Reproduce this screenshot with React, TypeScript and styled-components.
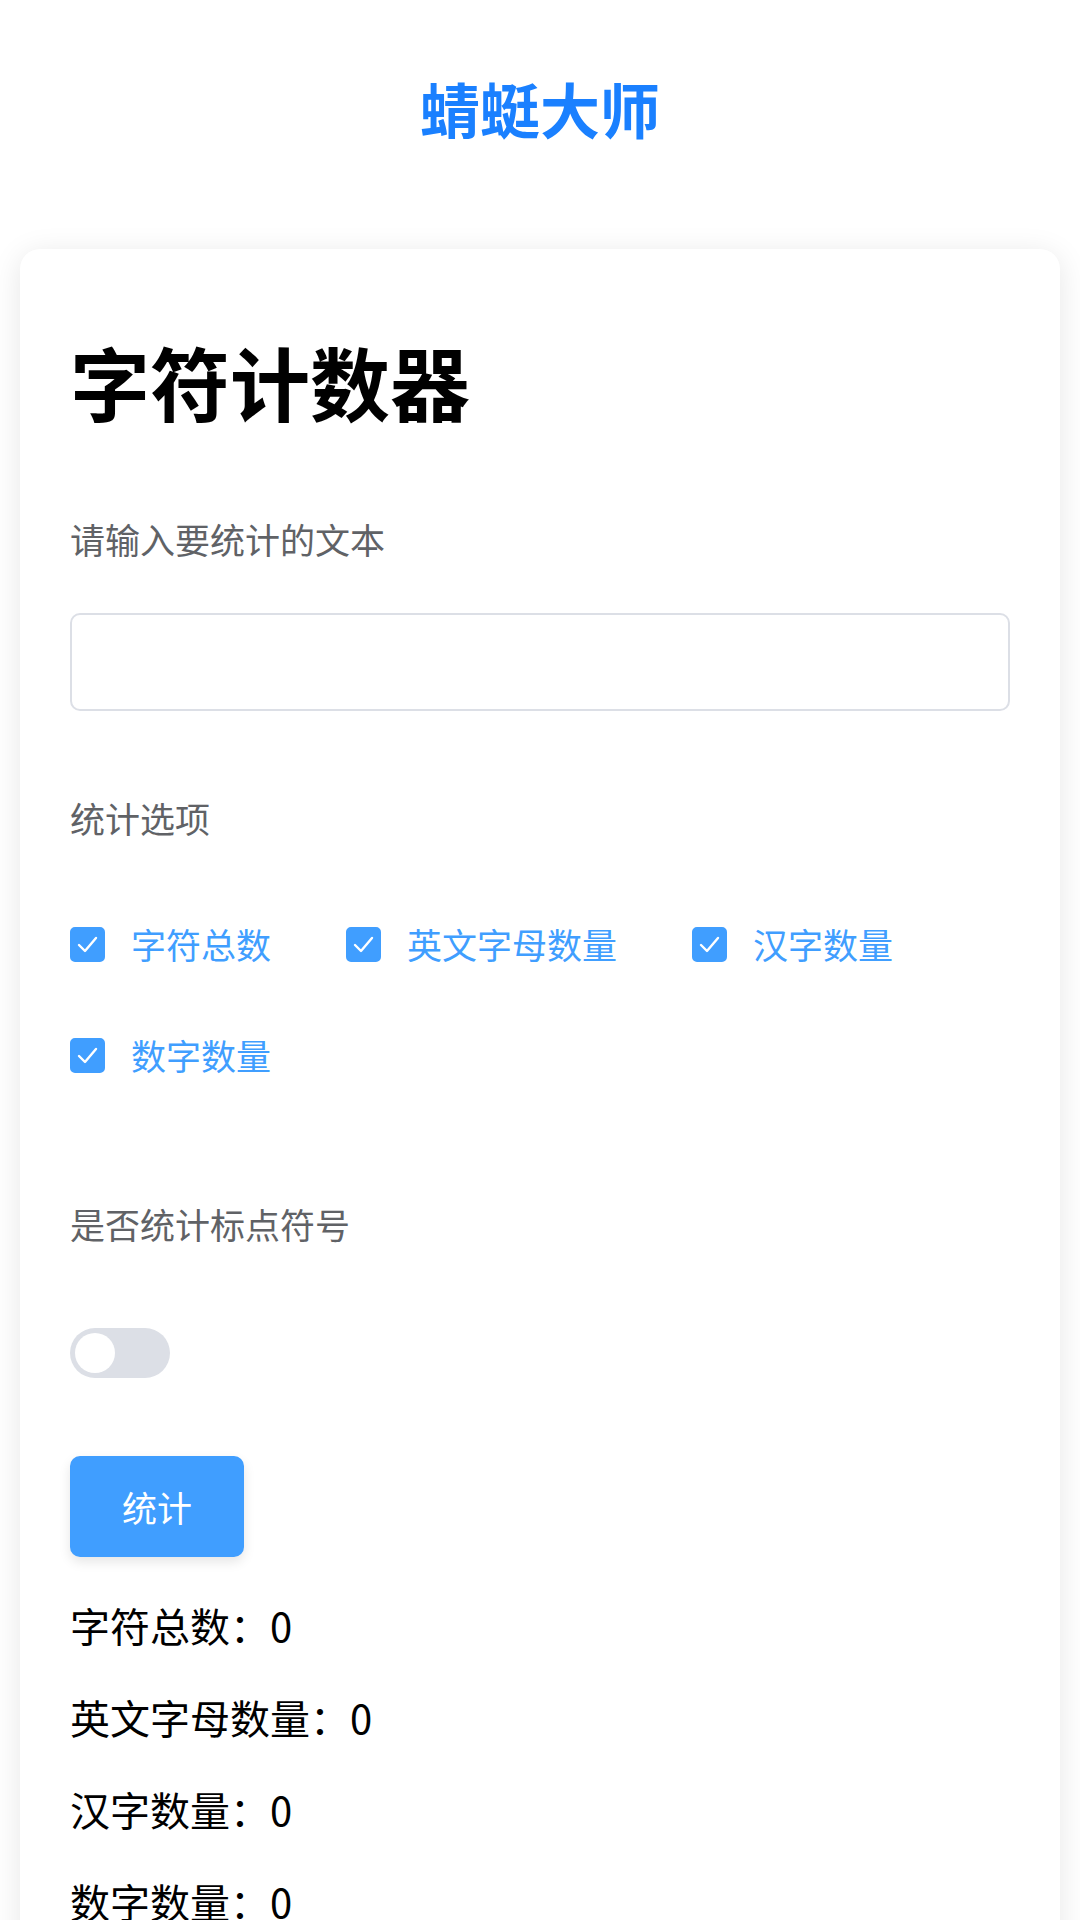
import React, { FC, useState } from 'react';
import styled, { createGlobalStyle } from 'styled-components';

const GlobalStyle = createGlobalStyle`
  html, body {
    margin: 0;
    padding: 0;
    background: #ffffff;
  }
  body {
    font-family: "Noto Sans CJK SC", "Noto Sans", sans-serif;
    color: #000;
  }
  * {
    box-sizing: border-box;
  }
`;

const StyledPage = styled.div`
  display: flex;
  flex-direction: column;
  min-height: 1920px;
  overflow: hidden;
`;

const StyledBrand = styled.h1`
  margin: 68px 0 101px;
  font-size: 60px;
  line-height: 80px;
  font-weight: 700;
  color: #1a80ff;
  text-align: center;
`;

const StyledCard = styled.main`
  margin: 0 20px;
  padding: 50px 50px 60px;
  background: #fff;
  border-radius: 20px;
  box-shadow: 0 5px 30px rgba(0, 0, 0, 0.1);
  display: flex;
  flex-direction: column;
  align-items: flex-start;
`;

const StyledHeading = styled.h2`
  margin: 31px 0 0;
  font-size: 80px;
  line-height: 100px;
  font-weight: 700;
  color: #000;
`;

const StyledLabel = styled.label<{ $top: number }>`
  display: block;
  margin-top: ${({ $top }) => $top}px;
  font-size: 35px;
  line-height: 50px;
  color: #606266;
`;

const StyledInput = styled.input`
  margin-top: 49px;
  width: 100%;
  height: 98px;
  padding: 0 30px;
  border: 2px solid #dcdfe6;
  border-radius: 10px;
  font-size: 35px;
  font-family: inherit;
  color: #606266;
  outline: none;
`;

const StyledCheckGroup = styled.div`
  margin-top: 76px;
  display: flex;
  flex-wrap: wrap;
  row-gap: 61px;
  width: 100%;
`;

const StyledCheckItem = styled.label`
  display: flex;
  align-items: center;
  height: 50px;
  margin-right: 75px;
  cursor: pointer;
`;

const StyledCheckBox = styled.span<{ $checked: boolean }>`
  display: flex;
  align-items: center;
  justify-content: center;
  width: 35px;
  height: 35px;
  border-radius: 5px;
  background: ${({ $checked }) => ($checked ? '#409eff' : '#fff')};
  border: 2px solid ${({ $checked }) => ($checked ? '#409eff' : '#dcdfe6')};
`;

const StyledCheckText = styled.span<{ $checked: boolean }>`
  padding-left: 26px;
  font-size: 35px;
  line-height: 50px;
  color: ${({ $checked }) => ($checked ? '#409eff' : '#606266')};
`;

const StyledSwitch = styled.button<{ $on: boolean }>`
  position: relative;
  margin-top: 79px;
  width: 100px;
  height: 50px;
  padding: 0;
  border: none;
  border-radius: 25px;
  background: ${({ $on }) => ($on ? '#409eff' : '#dcdfe6')};
  cursor: pointer;

  &::after {
    content: '';
    position: absolute;
    top: 5px;
    left: ${({ $on }) => ($on ? '55px' : '5px')};
    width: 40px;
    height: 40px;
    border-radius: 50%;
    background: #fff;
  }
`;

const StyledButton = styled.button`
  margin-top: 78px;
  height: 101px;
  padding: 0 52px;
  border: none;
  border-radius: 10px;
  background: #409eff;
  color: #fff;
  font-size: 35px;
  font-family: inherit;
  box-shadow: 0 5px 12px rgba(0, 0, 0, 0.1);
  cursor: pointer;
`;

const StyledResults = styled.div`
  margin-top: 38px;
  display: flex;
  flex-direction: column;
  gap: 32px;
`;

const StyledResult = styled.p`
  margin: 0;
  font-size: 40px;
  line-height: 60px;
  color: #000;
`;

const options = [
  { key: 'total', label: '字符总数' },
  { key: 'letters', label: '英文字母数量' },
  { key: 'han', label: '汉字数量' },
  { key: 'digits', label: '数字数量' },
];

const CheckMark: FC = () => (
  <svg width="31" height="31" viewBox="0 0 31 31">
    <polyline points="7,16 13,22 24,9" fill="none" stroke="#fff" strokeWidth="2.4" strokeLinecap="round" strokeLinejoin="round" />
  </svg>
);

const App: FC = () => {
  const [checked, setChecked] = useState<Record<string, boolean>>({
    total: true,
    letters: true,
    han: true,
    digits: true,
  });
  const [punct, setPunct] = useState(false);

  return (
    <StyledPage>
      <GlobalStyle />
      <StyledBrand>蜻蜓大师</StyledBrand>
      <StyledCard>
        <StyledHeading>字符计数器</StyledHeading>
        <StyledLabel $top={84}>请输入要统计的文本</StyledLabel>
        <StyledInput type="text" />
        <StyledLabel $top={82}>统计选项</StyledLabel>
        <StyledCheckGroup>
          {options.map(({ key, label }) => (
            <StyledCheckItem key={key} onClick={() => setChecked({ ...checked, [key]: !checked[key] })}>
              <StyledCheckBox $checked={checked[key]}>{checked[key] && <CheckMark />}</StyledCheckBox>
              <StyledCheckText $checked={checked[key]}>{label}</StyledCheckText>
            </StyledCheckItem>
          ))}
        </StyledCheckGroup>
        <StyledLabel $top={119}>是否统计标点符号</StyledLabel>
        <StyledSwitch $on={punct} onClick={() => setPunct(!punct)} />
        <StyledButton>统计</StyledButton>
        <StyledResults>
          {options.map(({ key, label }) => (
            <StyledResult key={key}>{label}：0</StyledResult>
          ))}
        </StyledResults>
      </StyledCard>
    </StyledPage>
  );
};

export default App;
